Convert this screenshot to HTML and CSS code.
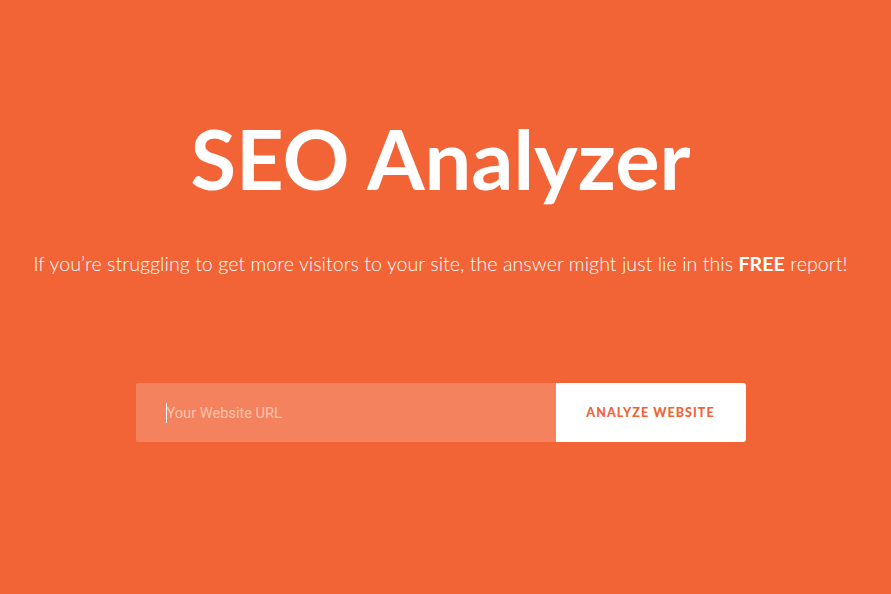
FILE: index.html
```html
<!DOCTYPE html>
<html lang="en">
<head>
<meta charset="utf-8">
<title>SEO Analyzer</title>
<link rel="stylesheet" href="styles.css">
</head>
<body>
<main class="hero">
  <h1 class="title">SEO Analyzer</h1>
  <p class="lead">If you’re struggling to get more visitors to your site, the answer might just lie in this <strong>FREE</strong> report!</p>
  <form class="search">
    <div class="field"><span class="caret"></span><span class="placeholder">Your Website URL</span></div>
    <button class="btn" type="button">ANALYZE WEBSITE</button>
  </form>
</main>
</body>
</html>
```
FILE: styles.css
```css
html, body {
  margin: 0;
  padding: 0;
  height: 100%;
  background: #f26336;
}
.hero {
  display: flex;
  flex-direction: column;
  align-items: center;
  padding-right: 10px;
  font-family: "Lato", "Open Sans", sans-serif;
  color: #fff;
}
.title {
  margin: 108px 0 0;
  font-size: 83px;
  font-weight: 700;
  line-height: 100px;
  letter-spacing: 0;
}
.lead {
  margin: 44px 0 0;
  font-size: 19.6px;
  font-weight: 300;
  line-height: 24px;
  letter-spacing: 0.05px;
}
.lead strong {
  font-weight: 700;
}
.search {
  display: flex;
  margin: 107px 0 0;
}
.field {
  width: 420px;
  height: 59px;
  background: #f4825e;
  border-radius: 2px 0 0 2px;
  display: flex;
  align-items: center;
  padding-left: 30px;
  box-sizing: border-box;
}
.caret {
  width: 1px;
  height: 20px;
  background: #fff;
}
.placeholder {
  font-size: 14.6px;
  color: #fbc3ad;
  font-family: "Roboto", sans-serif;
}
.btn {
  width: 190px;
  height: 59px;
  border: 0;
  background: #fff;
  border-radius: 0 3px 3px 0;
  color: #f26336;
  font-family: "Lato", sans-serif;
  font-weight: 900;
  font-size: 12.5px;
  letter-spacing: 1.05px;
  padding: 0;
}
```
